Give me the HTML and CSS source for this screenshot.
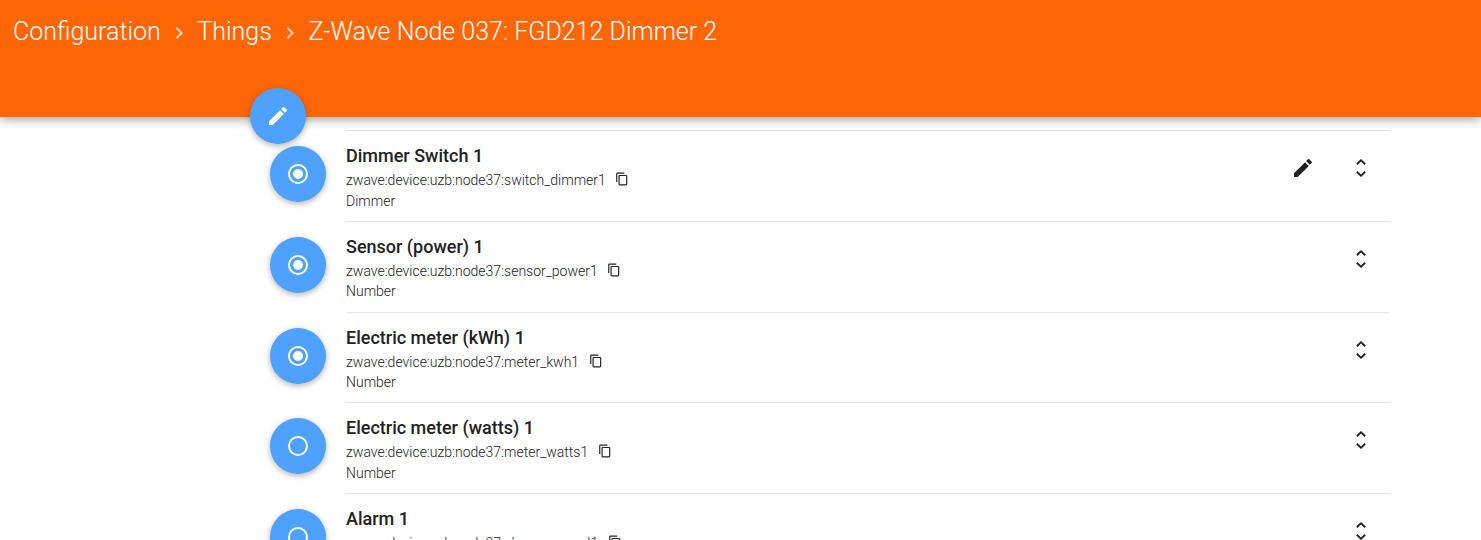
FILE: index.html
```html
<!DOCTYPE html>
<html lang="en">

<head>
  <meta charset="UTF-8" />
  <title>Thing details</title>
  <link rel="stylesheet" href="styles.css">
</head>

<body>
  <svg class="icon-defs" width="0" height="0">
    <defs>
      <symbol id="i-pencil" viewBox="0 0 24 24">
        <path d="M3 17.25V21h3.75L17.81 9.94l-3.75-3.75L3 17.25zM20.71 7.04a1 1 0 0 0 0-1.41l-2.34-2.34a1 1 0 0 0-1.41 0l-1.83 1.83 3.75 3.75 1.83-1.83z" />
      </symbol>
      <symbol id="i-on" viewBox="0 0 24 24">
        <path d="M12 7a5 5 0 1 0 0 10 5 5 0 0 0 0-10zm0-5a10 10 0 1 0 0 20 10 10 0 0 0 0-20zm0 18a8 8 0 1 1 0-16 8 8 0 0 1 0 16z" />
      </symbol>
      <symbol id="i-off" viewBox="0 0 24 24">
        <path d="M12 2a10 10 0 1 0 0 20 10 10 0 0 0 0-20zm0 18a8 8 0 1 1 0-16 8 8 0 0 1 0 16z" />
      </symbol>
      <symbol id="i-copy" viewBox="0 0 24 24">
        <path d="M16 1H4a2 2 0 0 0-2 2v14h2V3h12V1zm3 4H8a2 2 0 0 0-2 2v14a2 2 0 0 0 2 2h11a2 2 0 0 0 2-2V7a2 2 0 0 0-2-2zm0 16H8V7h11v14z" />
      </symbol>
      <symbol id="i-updown" viewBox="0 0 24 24">
        <path d="M8.5 8.9 12 5.6l3.500 3.300 1.300-1.300L12 3 7.200 7.600zM8.500 15.100 12 18.400l3.500-3.300 1.300 1.300L12 21l-4.800-4.600z" />
      </symbol>
      <symbol id="i-chevron" viewBox="0 0 24 24">
        <path d="M10 6 8.590 7.410 13.170 12l-4.580 4.590L10 18l6-6z" />
      </symbol>
    </defs>
  </svg>

  <header class="topbar">
    <nav class="crumbs">
      <span>Configuration</span>
      <span class="sep"><svg class="ico-24"><use href="#i-chevron" /></svg></span>
      <span>Things</span>
      <span class="sep"><svg class="ico-24"><use href="#i-chevron" /></svg></span>
      <span>Z-Wave Node 037: FGD212 Dimmer 2</span>
    </nav>
  </header>

  <button class="fab fab-edit"><svg class="ico-24"><use href="#i-pencil" /></svg></button>

  <main class="channels">
    <div class="channel">
      <div class="fab"><svg class="ico-24"><use href="#i-on" /></svg></div>
      <div class="info">
        <h3>Dimmer Switch 1</h3>
        <p class="uid">zwave:device:uzb:node37:switch_dimmer1 <svg class="ico-copy"><use href="#i-copy" /></svg></p>
        <p class="type">Dimmer</p>
      </div>
      <svg class="ico-24 edit"><use href="#i-pencil" /></svg>
      <svg class="ico-24 expand"><use href="#i-updown" /></svg>
    </div>

    <div class="channel">
      <div class="fab"><svg class="ico-24"><use href="#i-on" /></svg></div>
      <div class="info">
        <h3>Sensor (power) 1</h3>
        <p class="uid">zwave:device:uzb:node37:sensor_power1 <svg class="ico-copy"><use href="#i-copy" /></svg></p>
        <p class="type">Number</p>
      </div>
      <svg class="ico-24 expand"><use href="#i-updown" /></svg>
    </div>

    <div class="channel">
      <div class="fab"><svg class="ico-24"><use href="#i-on" /></svg></div>
      <div class="info">
        <h3>Electric meter (kWh) 1</h3>
        <p class="uid">zwave:device:uzb:node37:meter_kwh1 <svg class="ico-copy"><use href="#i-copy" /></svg></p>
        <p class="type">Number</p>
      </div>
      <svg class="ico-24 expand"><use href="#i-updown" /></svg>
    </div>

    <div class="channel">
      <div class="fab"><svg class="ico-24"><use href="#i-off" /></svg></div>
      <div class="info">
        <h3>Electric meter (watts) 1</h3>
        <p class="uid">zwave:device:uzb:node37:meter_watts1 <svg class="ico-copy"><use href="#i-copy" /></svg></p>
        <p class="type">Number</p>
      </div>
      <svg class="ico-24 expand"><use href="#i-updown" /></svg>
    </div>

    <div class="channel">
      <div class="fab"><svg class="ico-24"><use href="#i-off" /></svg></div>
      <div class="info">
        <h3>Alarm 1</h3>
        <p class="uid">zwave:device:uzb:node37:alarm_general1 <svg class="ico-copy"><use href="#i-copy" /></svg></p>
        <p class="type">Switch</p>
      </div>
      <svg class="ico-24 expand"><use href="#i-updown" /></svg>
    </div>
  </main>
</body>

</html>
```

FILE: styles.css
```css
html,
body {
  height: 100%;
  overflow: hidden;
}

body {
  margin: 0;
  position: relative;
  font-family: Roboto, sans-serif;
  background-color: #fff;
  color: #212121;
}

.icon-defs {
  position: absolute;
}

.topbar {
  position: relative;
  z-index: 1;
  height: 117px;
  box-sizing: border-box;
  padding: 18px 13px 0;
  background-color: #ff6606;
  box-shadow: 0 2px 10px rgba(0, 0, 0, 0.4);
  color: #fff;
}

.crumbs {
  display: flex;
  align-items: center;
  font-size: 25px;
  font-weight: 300;
  line-height: 28px;
}

.sep {
  display: flex;
  justify-content: center;
  width: 36.5px;
  padding-top: 2px;
  fill: rgba(255, 255, 255, 0.7);
}

.fab {
  display: flex;
  flex: none;
  align-items: center;
  justify-content: center;
  width: 56px;
  height: 56px;
  padding: 0;
  border: 0;
  border-radius: 50%;
  background-color: #4fa1ff;
  box-shadow: 0 2px 6px rgba(0, 0, 0, 0.3);
  fill: #fff;
}

.fab-edit {
  position: absolute;
  z-index: 2;
  left: 250px;
  top: 88px;
}

.ico-24 {
  width: 24px;
  height: 24px;
}

.channels {
  margin: 13px 91px 0 270px;
}

.channel {
  display: flex;
  align-items: flex-start;
  height: 90.75px;
  box-sizing: border-box;
  position: relative;
}

.channel > .fab {
  margin-top: 16px;
  margin-right: 20px;
}

.info {
  flex: 1;
  height: 100%;
  box-sizing: border-box;
  padding-top: 14px;
  border-top: 1px solid #e5e5e5;
}

.info h3 {
  margin: 0;
  font-size: 18px;
  font-weight: 500;
  line-height: 21px;
}

.uid,
.type {
  margin: 0;
  font-size: 14px;
  line-height: 21px;
  font-weight: 300;
  color: #212121;
}

.uid {
  margin-top: 4px;
}

.type {
  margin-top: -0.5px;
}

.ico-copy {
  width: 14px;
  height: 14px;
  margin-left: 6px;
  vertical-align: -1px;
  fill: #212121;
}

.edit {
  position: absolute;
  right: 75px;
  top: 26px;
  fill: #212121;
}

.expand {
  position: absolute;
  right: 17px;
  top: 26px;
  fill: #212121;
}
```
